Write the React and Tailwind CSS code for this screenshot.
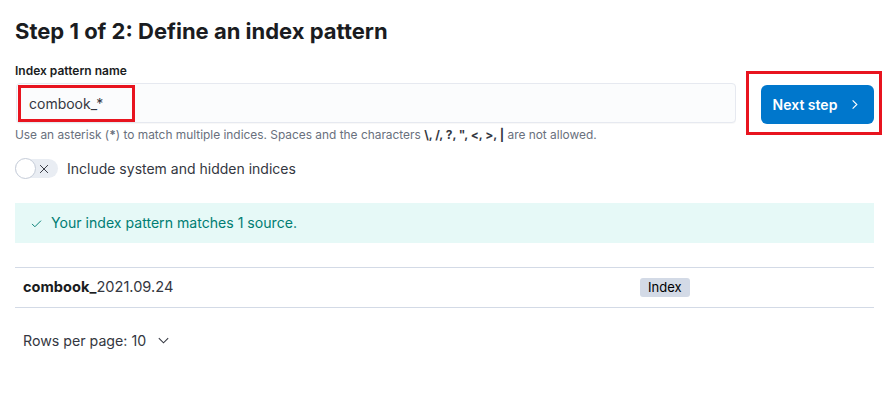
import React from "react";

const ChevronRight = ({ className }) => (
  <svg viewBox="0 0 16 16" className={className} fill="none" stroke="currentColor" strokeWidth="1.2">
    <path d="M6 3.5l4.5 4.5L6 12.5" />
  </svg>
);

const ChevronDown = ({ className }) => (
  <svg viewBox="0 0 16 16" className={className} fill="none" stroke="currentColor" strokeWidth="1.1">
    <path d="M3 5.5l5 5 5-5" />
  </svg>
);

const Cross = ({ className }) => (
  <svg viewBox="0 0 16 16" className={className} fill="none" stroke="currentColor" strokeWidth="1.1">
    <path d="M3.5 3.5l9 9M12.5 3.5l-9 9" />
  </svg>
);

const Check = ({ className }) => (
  <svg viewBox="0 0 16 16" className={className} fill="none" stroke="currentColor" strokeWidth="1.2">
    <path d="M2.5 8.5l3.5 3.5 7.5-7.5" />
  </svg>
);

const App = () => {
  return (
    <div className="w-[889px] h-[394px] bg-white px-[15px] pt-[17px] text-[#343741] font-['Inter',sans-serif] overflow-hidden">
      <h1 className="text-[22px] leading-[28px] font-bold text-[#1a1c21]">
        Step 1 of 2: Define an index pattern
      </h1>

      <div className="flex items-start">
        <div className="flex-1">
          <label className="block mt-[18px] text-[12px] leading-[16px] font-semibold text-[#1a1c21]">
            Index pattern name
          </label>
          <div className="mt-[4px] h-[40px] ml-[1px] bg-[#fbfcfd] rounded-[4px] border border-[#e6e9f0] shadow-[0_1px_1px_rgba(0,0,0,0.03)] flex items-center">
            <div className="ml-[1px] h-[37px] w-[117px] border-[3px] border-[#e8141f] flex items-center pl-[8px] text-[14px] text-[#343741]">
              combook_*
            </div>
          </div>
          <p className="mt-[4px] text-[11.9px] leading-[16px] text-[#69707d] whitespace-nowrap">
            Use an asterisk (<span className="font-bold">*</span>) to match multiple indices. Spaces and the
            characters <span className="font-bold text-[#343741]">\, /, ?, ", &lt;, &gt;, |</span> are not allowed.
          </p>
        </div>

        <div className="ml-[10px] -mr-[8px] mt-[26px] border-[3px] border-[#e8141f] pl-[12px] pr-[5px] pt-[11px] pb-[8px]">
          <button className="h-[39px] w-[113px] rounded-[6px] bg-[#0077cc] text-white text-[14px] font-semibold flex items-center justify-center gap-[10px]">
            Next step
            <ChevronRight className="w-[15px] h-[15px]" />
          </button>
        </div>
      </div>

      <div className="mt-[16px] flex items-center gap-[9px]">
        <div className="relative w-[43px] h-[19px] rounded-full bg-[#e9edf3] flex items-center justify-end pr-[7px]">
          <div className="absolute left-0 top-[-1px] w-[21px] h-[21px] rounded-full bg-white border border-[#c5ccd8]" />
          <Cross className="w-[14px] h-[14px] text-[#343741]" />
        </div>
        <span className="text-[14px] leading-[19px]">Include system and hidden indices</span>
      </div>

      <div className="mt-[25px] h-[40px] bg-[#e6f9f7] flex items-center pl-[15px] gap-[8px] text-[#017d73] text-[14.1px]">
        <Check className="w-[13px] h-[13px]" />
        <span>Your index pattern matches 1 source.</span>
      </div>

      <div className="mt-[24px] border-t border-b border-[#d3dae6] h-[41px] flex items-center pl-[8px] text-[14.6px]">
        <div className="flex-1">
          <span className="font-bold text-[#1a1c21]">combook_</span>
          <span>2021.09.24</span>
        </div>
        <div className="w-[234px]">
          <span className="inline-flex items-center h-[19px] px-[8px] rounded-[3px] bg-[#d3dae6] text-[13px] text-[#000]">
            Index
          </span>
        </div>
      </div>

      <div className="mt-[22px] flex items-center gap-[10px] pl-[8px] text-[14.2px]">
        <span>Rows per page: 10</span>
        <ChevronDown className="w-[15px] h-[15px]" />
      </div>
    </div>
  );
};

export default App;
